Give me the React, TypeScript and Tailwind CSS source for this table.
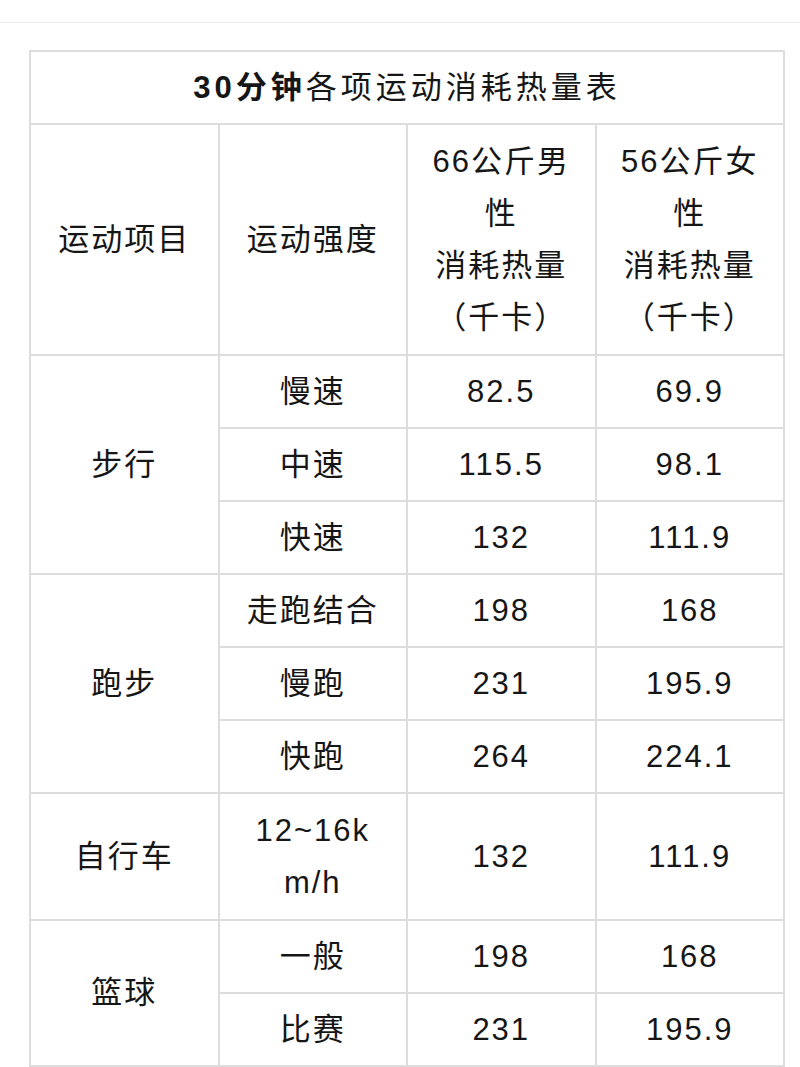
const font = { fontFamily: '"Liberation Sans", "Noto Sans CJK SC", sans-serif' };

type Row = { sport?: string; span?: number; level: React.ReactNode; male: string; female: string; tall?: boolean };

const rows: Row[] = [
  { sport: "步行", span: 3, level: "慢速", male: "82.5", female: "69.9" },
  { level: "中速", male: "115.5", female: "98.1" },
  { level: "快速", male: "132", female: "111.9" },
  { sport: "跑步", span: 3, level: "走跑结合", male: "198", female: "168" },
  { level: "慢跑", male: "231", female: "195.9" },
  { level: "快跑", male: "264", female: "224.1" },
  {
    sport: "自行车",
    span: 1,
    tall: true,
    level: (
      <>
        12~16k
        <br />
        m/h
      </>
    ),
    male: "132",
    female: "111.9",
  },
  { sport: "篮球", span: 2, level: "一般", male: "198", female: "168" },
  { level: "比赛", male: "231", female: "195.9" },
];

const cell = "border-2 border-[#dddddd] px-2 py-0 text-center align-middle";

export default function App() {
  return (
    <div className="min-h-screen bg-white text-[#161616]" style={font}>
      <div className="h-[23px] border-b border-[#ececec]" />
      <div className="pl-[29px] pt-[27px]">
        <table className="w-[756px] table-fixed border-collapse text-[31px] leading-[52px] tracking-[2px]">
          <colgroup>
            <col className="w-1/4" />
            <col className="w-1/4" />
            <col className="w-1/4" />
            <col className="w-1/4" />
          </colgroup>
          <tbody>
            <tr className="h-[73px]">
              <td colSpan={4} className={`${cell} tracking-[4px]`}>
                <span className="font-bold">30分钟</span>各项运动消耗热量表
              </td>
            </tr>
            <tr className="h-[231px]">
              <td className={cell}>运动项目</td>
              <td className={cell}>运动强度</td>
              <td className={cell}>
                66公斤男
                <br />
                性
                <br />
                消耗热量
                <br />
                （千卡）
              </td>
              <td className={cell}>
                56公斤女
                <br />
                性
                <br />
                消耗热量
                <br />
                （千卡）
              </td>
            </tr>
            {rows.map((r, i) => (
              <tr key={i} className={r.tall ? "h-[127px]" : "h-[73px]"}>
                {r.sport ? (
                  <td rowSpan={r.span} className={cell}>
                    {r.sport}
                  </td>
                ) : null}
                <td className={cell}>{r.level}</td>
                <td className={cell}>{r.male}</td>
                <td className={cell}>{r.female}</td>
              </tr>
            ))}
          </tbody>
        </table>
      </div>
    </div>
  );
}
